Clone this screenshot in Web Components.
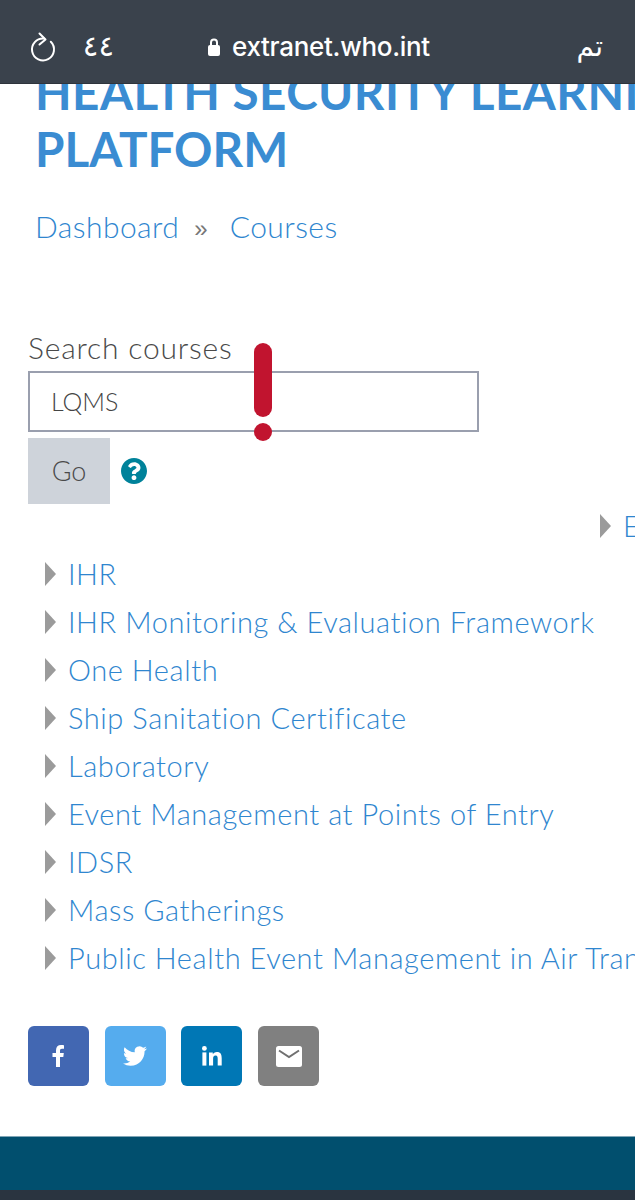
<!DOCTYPE html>
<html lang="en"><head><meta charset="utf-8"><title>Courses</title>
<style>
html,body{margin:0;padding:0;background:#fff;overflow:hidden;height:1200px;width:635px}
body{font-family:Lato,"Open Sans",sans-serif;color:#4a4a4a}
</style></head><body>
<browser-bar></browser-bar>
<page-title></page-title>
<bread-crumb></bread-crumb>
<course-search></course-search>
<category-tree>
  <tree-item class="far">Emergency</tree-item>
  <tree-item>IHR</tree-item>
  <tree-item>IHR Monitoring &amp; Evaluation Framework</tree-item>
  <tree-item>One Health</tree-item>
  <tree-item>Ship Sanitation Certificate</tree-item>
  <tree-item>Laboratory</tree-item>
  <tree-item>Event Management at Points of Entry</tree-item>
  <tree-item>IDSR</tree-item>
  <tree-item>Mass Gatherings</tree-item>
  <tree-item>Public Health Event Management in Air Transport</tree-item>
</category-tree>
<social-row></social-row>
<site-footer></site-footer>
<script>
const def=(name,html)=>customElements.define(name,class extends HTMLElement{
  constructor(){super();this.attachShadow({mode:'open'}).innerHTML=html;}
});
def('browser-bar',`<style>
:host{display:flex;align-items:center;height:83px;padding-top:10px;background:#3a424c;color:#fff;box-sizing:border-box;position:relative;z-index:2;box-shadow:0 1px 0 #2e343c}
svg{display:block;flex:none}
.refresh{margin-left:30px}
.num{font:29px/1 "DejaVu Sans",sans-serif;margin-left:27px;width:31px;white-space:nowrap}
.lock{margin-left:94px}
.url{font:500 26px Inter,Roboto,sans-serif;margin-left:12px;letter-spacing:-.3px;white-space:nowrap}
.done{font:28px/1 "DejaVu Sans",sans-serif;margin-left:auto;margin-right:32px}
</style>
<svg class="refresh" width="26" height="34" viewBox="0 0 26 34" fill="none" stroke="#fff" stroke-width="2" stroke-linecap="round" stroke-linejoin="round"><path d="M14 8.500A11 11 0 1 0 20.800 11.700"/><path d="M9.500 3.500l6 6-6 5"/></svg>
<span class="num" dir="rtl">٤٤</span>
<svg class="lock" width="12" height="20" viewBox="0 0 12 20"><path d="M3 9V5.500a3 3 0 0 1 6 0V9" fill="none" stroke="#fff" stroke-width="2"/><rect x="0" y="8" width="12" height="11" rx="2" fill="#fff"/></svg>
<span class="url">extranet.who.int</span>
<span class="done" dir="rtl">تم</span>`);
def('page-title',`<style>
:host{display:block;height:89px;overflow:hidden;padding:0 0 0 35px}
h1{margin:-20px 0 0;font:700 47.600px/57px Lato,sans-serif;color:#3a8cd2;white-space:nowrap}
.a{letter-spacing:.45px}
</style><h1><span class="a">HEALTH SECURITY LEARNING</span><br>PLATFORM</h1>`);
def('bread-crumb',`<style>
:host{display:flex;align-items:center;margin:36px 0 0 35px;height:36px;font:300 30px/36px Lato,sans-serif;letter-spacing:.45px;color:#2f86cf}
i{font:normal 24px/36px "Liberation Sans",sans-serif;color:#777;margin:6px 22px 0 15px;letter-spacing:0}
</style><span>Dashboard</span><i>»</i><span>Courses</span>`);
def('course-search',`<style>
:host{display:block;position:relative;margin:85px 0 0 28px}
label{display:block;font:300 30px/36px Lato,sans-serif;letter-spacing:.8px;color:#4a4a4a;height:36px}
.box{box-sizing:border-box;width:451px;height:61px;border:2px solid #9a9fae;background:#fff;margin-top:6px;padding-left:21px;font:300 25px/56px Lato,sans-serif;color:#444}
.act{display:flex;align-items:center;margin-top:6px;gap:11px}
.go{width:82px;height:66px;background:#ced3da;font:300 27px/66px Lato,sans-serif;color:#4a4a4a;text-align:center}
.mark{position:absolute;left:226px;top:14px;width:18px;height:98px;display:flex;flex-direction:column;justify-content:space-between}
.mark b{display:block;background:#c1142f;border-radius:9px}
.mark b:first-child{height:74px}.mark b:last-child{height:18px}
</style><label>Search courses</label><div class="box">LQMS</div>
<div class="act"><div class="go">Go</div>
<svg width="26" height="26" viewBox="8 8 496 496"><path fill="#00829a" d="M504 256c0 136.997-111.043 248-248 248S8 392.997 8 256C8 119.083 119.043 8 256 8s248 111.083 248 248zM262.655 90c-54.497 0-89.255 22.957-116.549 63.758-3.536 5.286-2.353 12.415 2.715 16.258l34.699 26.31c5.205 3.947 12.621 3.008 16.665-2.122 17.864-22.658 30.113-35.797 57.303-35.797 20.429 0 45.698 13.148 45.698 32.958 0 14.976-12.363 22.667-32.534 33.976C247.128 238.528 216 254.941 216 296v4c0 6.627 5.373 12 12 12h56c6.627 0 12-5.373 12-12v-1.333c0-28.462 83.186-29.647 83.186-106.667 0-58.002-60.165-102-116.531-102zM256 338c-25.365 0-46 20.635-46 46 0 25.364 20.635 46 46 46s46-20.636 46-46c0-25.365-20.635-46-46-46z"/></svg></div>
<div class="mark"><b></b><b></b></div>`);
def('category-tree',`<style>:host{display:block;margin-top:-2px}</style><slot></slot>`);
def('tree-item',`<style>
:host{display:flex;align-items:center;height:48px;padding-left:45px;white-space:nowrap;font:300 29px/48px Lato,sans-serif;letter-spacing:.57px;color:#2f86cf}
:host(.far){padding-left:600px}
svg{flex:none;margin-right:12px}
</style><svg width="11" height="24" viewBox="0 0 11 24"><path d="M0 0l11 12L0 24z" fill="#9b9b9b"/></svg><slot></slot>`);
def('social-row',`<style>
:host{display:flex;gap:15.700px;margin:44px 0 0 28px}
a{display:flex;align-items:center;justify-content:center;width:61px;height:60px;border-radius:6px}
</style>
<a style="background:#4267b2"><svg width="14" height="22" viewBox="0 0 14 22"><path fill="#fff" d="M4 22V12H.5V8H4V5.200C4 1.900 6 0 9 0c1.400 0 2.600.1 3 .2v3.500h-2c-1.600 0-2 .8-2 1.900V8h3.800l-.5 4H8v10z"/></svg></a>
<a style="background:#55acee"><svg width="24" height="24" viewBox="0 0 24 24"><path fill="#fff" d="M23.953 4.570a10 10 0 01-2.825.775 4.958 4.958 0 002.163-2.723c-.951.555-2.005.959-3.127 1.184a4.920 4.920 0 00-8.384 4.482C7.690 8.095 4.067 6.130 1.640 3.162a4.822 4.822 0 00-.666 2.475c0 1.710.870 3.213 2.188 4.096a4.904 4.904 0 01-2.228-.616v.06a4.923 4.923 0 003.946 4.827 4.996 4.996 0 01-2.212.085 4.936 4.936 0 004.604 3.417 9.867 9.867 0 01-6.102 2.105c-.39 0-.779-.023-1.170-.067a13.995 13.995 0 007.557 2.209c9.053 0 13.998-7.496 13.998-13.985 0-.21 0-.42-.015-.63A9.935 9.935 0 0024 4.590z"/></svg></a>
<a style="background:#0077b5"><svg width="20" height="20" viewBox="0 0 20 20"><circle cx="2.400" cy="2.400" r="2.400" fill="#fff"/><rect x=".4" y="6.400" width="4" height="13.200" fill="#fff"/><path fill="#fff" d="M7 6.400h3.800v1.900c.6-1.100 2-2.200 4-2.200 4.100 0 4.900 2.700 4.900 6.200v7.300h-4v-6.500c0-1.600 0-3.500-2.100-3.500s-2.500 1.600-2.500 3.400v6.600H7z"/></svg></a>
<a style="background:#808080"><svg width="26" height="21" viewBox="0 0 26 21"><rect width="26" height="21" rx="2.500" fill="#fff"/><path d="M3 4.500l10 6.500 10-6.500" fill="none" stroke="#707070" stroke-width="2"/></svg></a>`);
def('site-footer',`<style>
:host{display:block;margin-top:50px}
.a{height:54px;background:#014f6e;border-top:1px solid #7fa5b6;box-sizing:border-box}
.b{height:10px;background:#2a3440}
</style><div class="a"></div><div class="b"></div>`);
</script>
</body></html>
